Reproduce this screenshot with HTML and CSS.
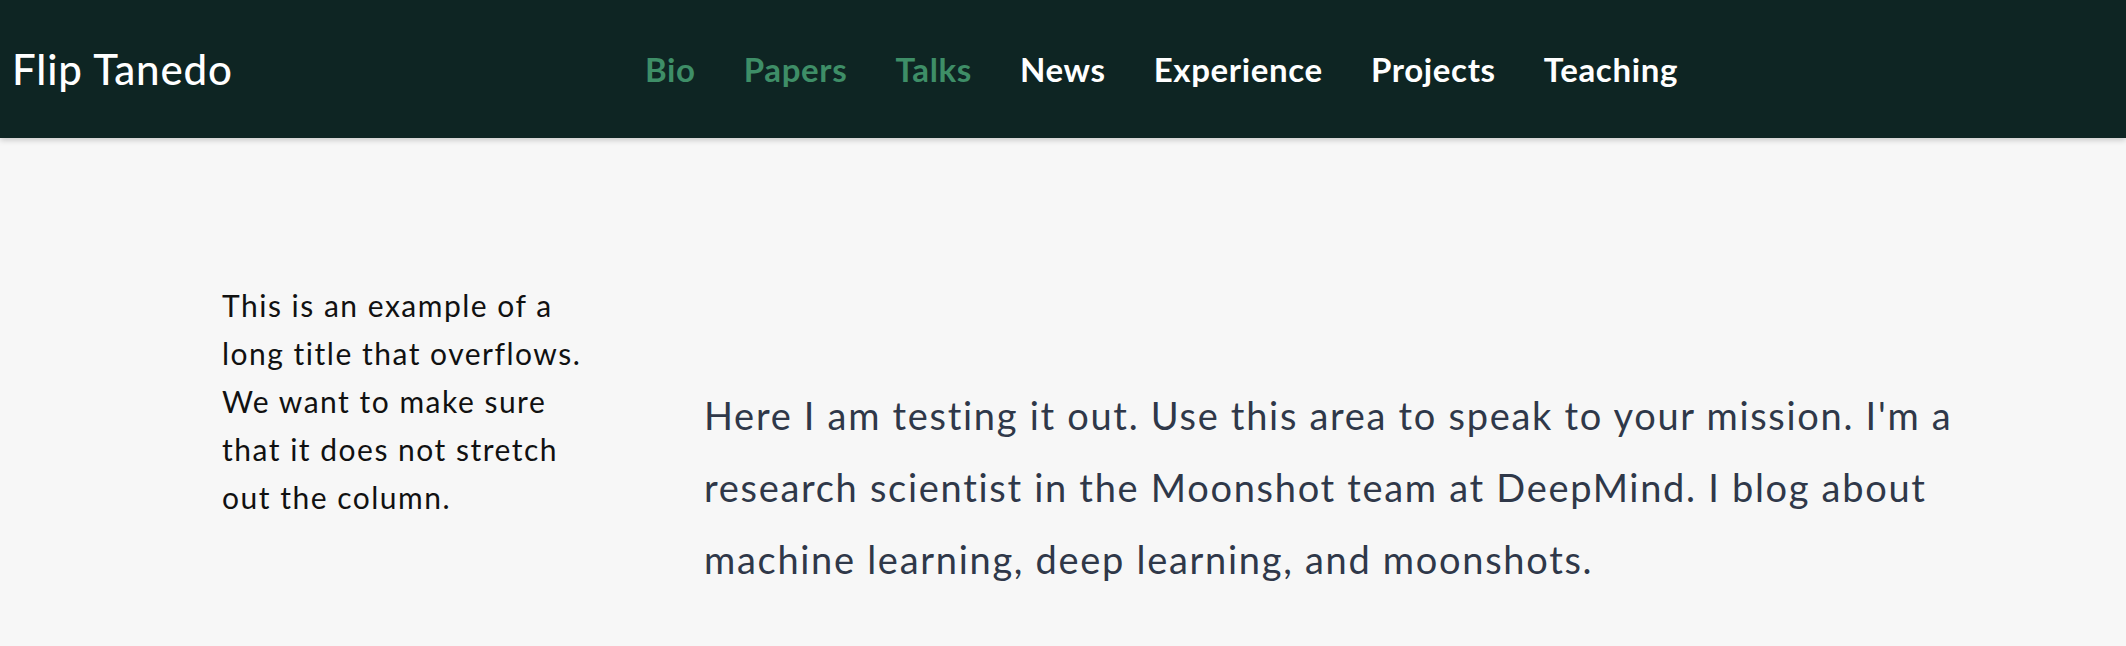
FILE: index.html
```html
<!DOCTYPE html>
<html lang="en">
<head>
<meta charset="utf-8">
<title>Flip Tanedo</title>
<link rel="stylesheet" href="styles.css">
</head>
<body>
<header class="site-header">
  <a class="brand" href="#">Flip Tanedo</a>
  <nav class="nav">
    <a class="nav-link nav-link--accent" href="#">Bio</a>
    <a class="nav-link nav-link--accent" href="#">Papers</a>
    <a class="nav-link nav-link--accent" href="#">Talks</a>
    <a class="nav-link" href="#">News</a>
    <a class="nav-link" href="#">Experience</a>
    <a class="nav-link" href="#">Projects</a>
    <a class="nav-link" href="#">Teaching</a>
  </nav>
</header>
<main class="content">
  <aside class="aside-title">This is an example of a long title that overflows. We want to make sure that it does not stretch out the column.</aside>
  <section class="mission">
    <p class="mission-text">Here I am testing it out. Use this area to speak to your mission. I'm a research scientist in the Moonshot team at DeepMind. I blog about machine learning, deep learning, and moonshots.</p>
  </section>
</main>
</body>
</html>
```

FILE: styles.css
```css
* { box-sizing: border-box; }

html, body {
  margin: 0;
  padding: 0;
}

body {
  background: #f7f7f7;
  font-family: "Lato", "Open Sans", sans-serif;
  overflow: hidden;
}

a { text-decoration: none; }

.site-header {
  height: 138px;
  background: #0e2523;
  display: grid;
  grid-template-columns: 633px auto;
  align-items: center;
  padding-left: 12px;
  box-shadow: 0 2px 6px rgba(0, 0, 0, 0.2);
  position: relative;
  z-index: 1;
}

.brand {
  color: #ffffff;
  font-size: 42px;
  font-weight: 500;
  letter-spacing: 0.9px;
}

.nav {
  display: flex;
  gap: 48px;
}

.nav-link {
  color: #ffffff;
  font-size: 33px;
  font-weight: 700;
  letter-spacing: 0.65px;
}

.nav-link--accent {
  color: #3e8e67;
}

.content {
  display: grid;
  grid-template-columns: 375px 1290px;
  column-gap: 107px;
  padding-left: 222px;
  padding-top: 143px;
}

.aside-title {
  font-size: 30px;
  line-height: 48px;
  letter-spacing: 1.5px;
  color: #111111;
}

.mission {
  padding-top: 98px;
}

.mission-text {
  margin: 0;
  font-size: 38px;
  line-height: 72px;
  letter-spacing: 1.7px;
  color: #2f3849;
}
```
